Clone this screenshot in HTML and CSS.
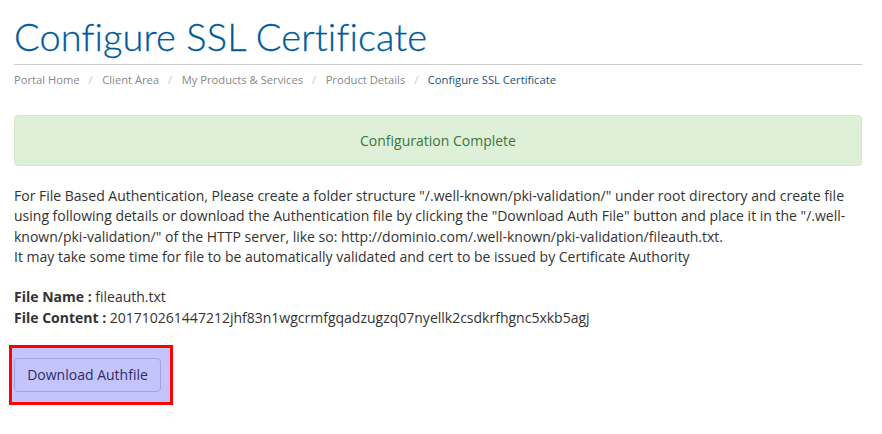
FILE: index.html
```html
<!DOCTYPE html>
<html>
<head>
<meta charset="utf-8">
<link rel="stylesheet" href="styles.css">
</head>
<body>
<div class="page">
  <div class="header">
    <h1 class="title">Configure SSL Certificate</h1>
  </div>
  <ol class="crumbs">
    <li><a>Portal Home</a></li>
    <li><a>Client Area</a></li>
    <li><a>My Products &amp; Services</a></li>
    <li><a>Product Details</a></li>
    <li class="active">Configure SSL Certificate</li>
  </ol>
  <div class="alert">Configuration Complete</div>
  <p class="info">For File Based Authentication, Please create a folder structure "/.well-known/pki-validation/" under root directory and create file using following details or download the Authentication file by clicking the "Download Auth File" button and place it in the "/.well-known/pki-validation/" of the HTTP server, like so: http://dominio.com/.well-known/pki-validation/fileauth.txt.<br>It may take some time for file to be automatically validated and cert to be issued by Certificate Authority</p>
  <p class="info"><b>File Name :</b> fileauth.txt<br><b>File Content :</b> 201710261447212jhf83n1wgcrmfgqadzugzq07nyellk2csdkrfhgnc5xkb5agj</p>
  <div class="highlight">
    <button class="btn">Download Authfile</button>
  </div>
</div>
</body>
</html>
```
FILE: styles.css
```css
* { box-sizing: border-box; }
body {
  margin: 0;
  font-family: "Open Sans", "Liberation Sans", sans-serif;
  font-size: 14px;
  line-height: 20px;
  color: #333;
  background: #fff;
}
.page {
  padding: 0 20px 0 14px;
}
.header {
  border-bottom: 1px solid #ccc;
  padding-top: 14px;
  padding-bottom: 6px;
}
.title {
  margin: 0;
  font-family: "Lato", "Open Sans", sans-serif;
  font-weight: 300;
  font-size: 38px;
  line-height: 44px;
  color: #005b9a;
  letter-spacing: 0.1px;
  -webkit-text-stroke: 0.3px #005b9a;
}
.crumbs {
  list-style: none;
  margin: 0;
  padding: 4px 0 0;
  display: flex;
  font-size: 11.2px;
  line-height: 22px;
  color: #888;
}
.crumbs li + li::before {
  content: "/";
  color: #ccc;
  padding: 0 9.5px 0 9px;
}
.crumbs a { color: #888; }
.crumbs .active { color: #1d4f7c; }
.alert {
  margin-top: 24px;
  height: 51px;
  background: #dff0d8;
  border: 1px solid #d6e9c6;
  border-radius: 4px;
  color: #3c763d;
  display: flex;
  align-items: center;
  justify-content: center;
}
.info {
  margin: 20px 0 0;
  line-height: 20.33px;
}
.info + .info { margin-top: 20px; }
.highlight {
  margin-top: 17px;
  margin-left: -5px;
  width: 164px;
  padding: 10px 9px 10px 2px;
  border: 3px solid #ff0000;
  background: #c4c4fc;
  display: flex;
  justify-content: flex-end;
}
.btn {
  font-family: "Open Sans", "Liberation Sans", sans-serif;
  font-size: 14px;
  line-height: 20px;
  color: #2d2d66;
  background: #c4c4fc;
  border: 1px solid #a3a3d8;
  border-radius: 4px;
  padding: 6px 12px;
  width: 147px;
}
```
